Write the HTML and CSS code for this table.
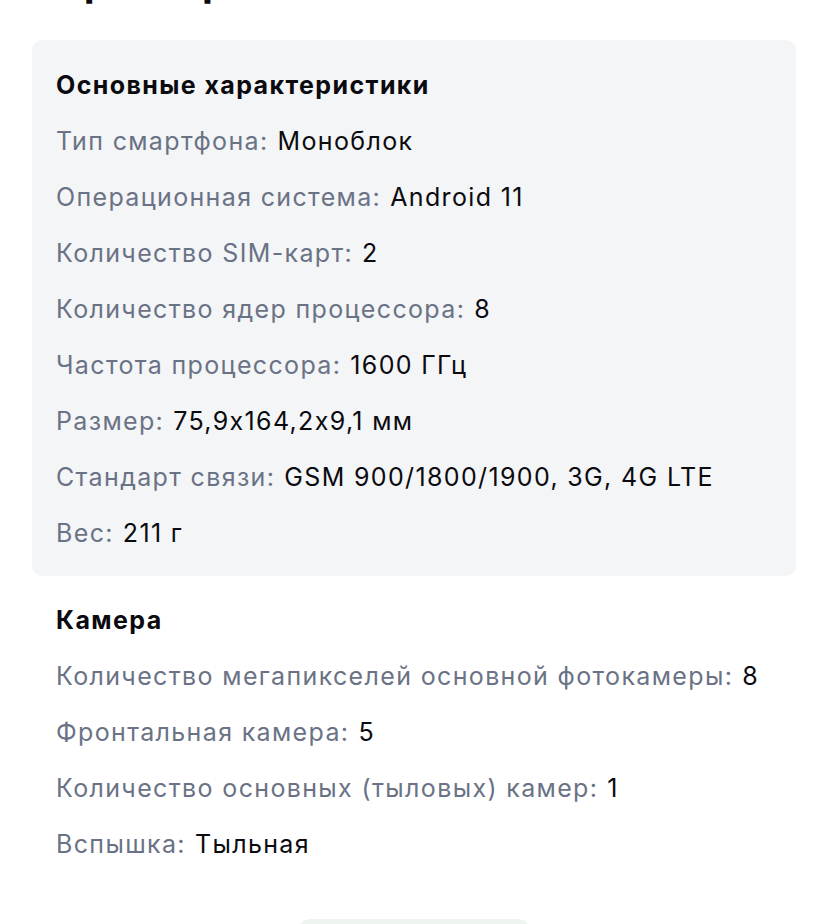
FILE: index.html
```html
<!DOCTYPE html>
<html lang="ru">
<head>
<meta charset="utf-8">
<link rel="stylesheet" href="styles.css">
</head>
<body>
<main class="page">
  <h1 class="page-title">Характеристики</h1>

  <section class="spec-group spec-group--card">
    <h2 class="spec-title">Основные характеристики</h2>
    <div class="spec-row"><span class="spec-label">Тип смартфона:</span><span class="spec-value">Моноблок</span></div>
    <div class="spec-row"><span class="spec-label">Операционная система:</span><span class="spec-value">Android 11</span></div>
    <div class="spec-row"><span class="spec-label">Количество SIM-карт:</span><span class="spec-value">2</span></div>
    <div class="spec-row"><span class="spec-label">Количество ядер процессора:</span><span class="spec-value">8</span></div>
    <div class="spec-row"><span class="spec-label">Частота процессора:</span><span class="spec-value">1600 ГГц</span></div>
    <div class="spec-row"><span class="spec-label">Размер:</span><span class="spec-value">75,9x164,2x9,1 мм</span></div>
    <div class="spec-row"><span class="spec-label">Стандарт связи:</span><span class="spec-value">GSM 900/1800/1900, 3G, 4G LTE</span></div>
    <div class="spec-row"><span class="spec-label">Вес:</span><span class="spec-value">211 г</span></div>
  </section>

  <section class="spec-group">
    <h2 class="spec-title">Камера</h2>
    <div class="spec-row"><span class="spec-label">Количество мегапикселей основной фотокамеры:</span><span class="spec-value">8</span></div>
    <div class="spec-row"><span class="spec-label">Фронтальная камера:</span><span class="spec-value">5</span></div>
    <div class="spec-row"><span class="spec-label">Количество основных (тыловых) камер:</span><span class="spec-value">1</span></div>
    <div class="spec-row"><span class="spec-label">Вспышка:</span><span class="spec-value">Тыльная</span></div>
  </section>

  <div class="actions">
    <button class="more-btn" type="button">Все характеристики</button>
  </div>
</main>
</body>
</html>
```

FILE: styles.css
```css
* { box-sizing: border-box; }

html, body {
  margin: 0;
  padding: 0;
  background: #ffffff;
}

body {
  font-family: Inter, "Noto Sans", "DejaVu Sans", sans-serif;
  color: #0b0b0f;
  overflow: hidden;
  height: 924px;
}

.page {
  padding: 0 32px;
}

.page-title {
  margin: -42px 0 34px;
  font-size: 40px;
  line-height: 48px;
  font-weight: 700;
  letter-spacing: 0.6px;
  color: #0b0b0f;
}

.spec-group {
  padding: 0 24px;
}

.spec-group--card {
  background: #f4f5f7;
  border-radius: 10px;
  padding: 17px 24px 15px;
  margin-bottom: 16px;
}

.spec-title {
  margin: 0;
  font-size: 25px;
  line-height: 56px;
  font-weight: 700;
  letter-spacing: 1.4px;
  color: #0b0b0f;
}

.spec-row {
  display: flex;
  gap: 9px;
  font-size: 25px;
  line-height: 56px;
  letter-spacing: 1.35px;
}

.spec-label {
  color: #6a7285;
}

.spec-value {
  color: #0b0b0f;
}

.actions {
  display: flex;
  justify-content: center;
  margin-top: 47px;
}

.more-btn {
  width: 232px;
  height: 56px;
  border: none;
  border-radius: 12px;
  background: #eef5ef;
  color: #2e7d32;
  font: 600 20px Inter, sans-serif;
}
```
